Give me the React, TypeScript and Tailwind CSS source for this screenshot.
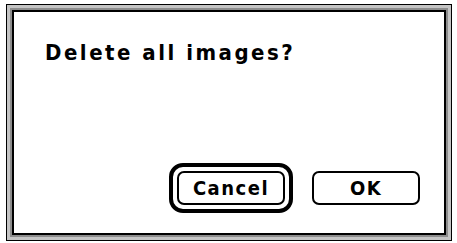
import React from 'react';

const font = { fontFamily: '"DejaVu Sans Condensed", "DejaVu Sans", sans-serif' };

const App: React.FC = () => {
  return (
    <div className="w-[457px] h-[243px] bg-white pl-[6px] pt-[4px]" style={font}>
      {/* dialog frame: black / gray bands / black */}
      <div className="w-[446px] h-[237px] border border-black">
        <div className="w-full h-full border-[3px] border-[#c4c4c4]">
          <div className="w-full h-full border-[2px] border-[#8c8c8c]">
            <div className="w-full h-full border-[2px] border-black bg-white flex flex-col pl-[31px] pt-[30px] pr-[24px] pb-[20px]">
              <p className="text-[22px] leading-[22px] font-bold tracking-[2.5px] text-black">Delete all images?</p>

              <div className="mt-auto flex items-center justify-end gap-[19px]">
                <div className="border-[4px] border-black rounded-[14px] p-[4px]">
                  <button className="w-[108px] h-[34px] border-2 border-black rounded-[7px] bg-white text-[20px] leading-none font-bold tracking-[1.5px] text-black">
                    Cancel
                  </button>
                </div>
                <button className="w-[108px] h-[34px] border-2 border-black rounded-[7px] bg-white text-[20px] leading-none font-bold tracking-[1.5px] text-black">
                  OK
                </button>
              </div>
            </div>
          </div>
        </div>
      </div>
    </div>
  );
};

export default App;
